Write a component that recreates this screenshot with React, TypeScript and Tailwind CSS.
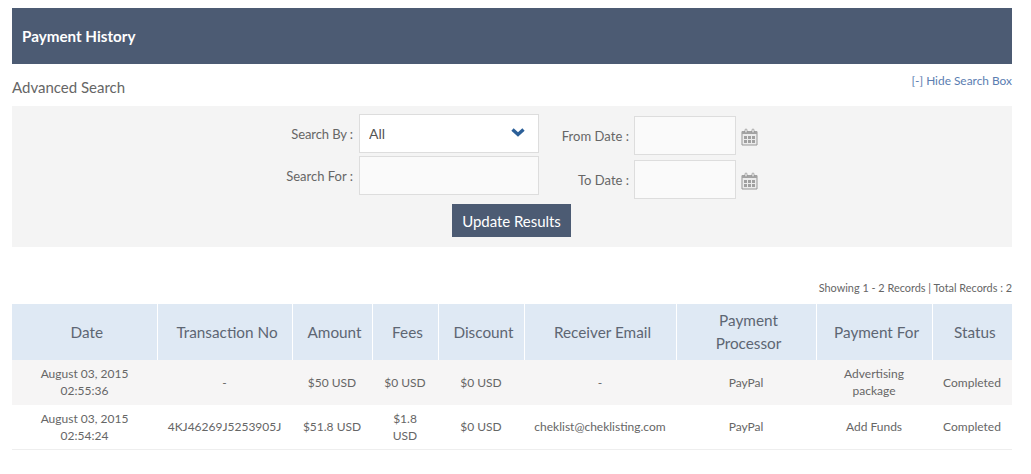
import React from "react";

function CalendarIcon() {
  return (
    <svg width="17" height="18" viewBox="0 0 17 18" className="shrink-0" aria-hidden="true">
      <path d="M1 3.5h15v13.5H1z" fill="#ececec" stroke="#979797" strokeWidth="1" />
      <rect x="1" y="3" width="15" height="3" fill="#a3a3a3" />
      <rect x="4" y="1" width="2" height="4" rx="1" fill="#f4f4f4" stroke="#8d8d8d" strokeWidth="0.7" />
      <rect x="11" y="1" width="2" height="4" rx="1" fill="#f4f4f4" stroke="#8d8d8d" strokeWidth="0.7" />
      {[3, 7, 11].map((x) =>
        [8, 12].map((y) => <rect key={`${x}-${y}`} x={x} y={y} width="3" height="3" fill="#a0a0a0" />)
      )}
    </svg>
  );
}

const cols = [145, 135, 80, 66, 86, 152, 140, 116, 80];
const heads = ["Date", "Transaction No", "Amount", "Fees", "Discount", "Receiver Email", "Payment Processor", "Payment For", "Status"];
const rows = [
  ["August 03, 2015 02:55:36", "-", "$50 USD", "$0 USD", "$0 USD", "-", "PayPal", "Advertising package", "Completed"],
  ["August 03, 2015 02:54:24", "4KJ46269J5253905J", "$51.8 USD", "$1.8 USD", "$0 USD", "cheklist@cheklisting.com", "PayPal", "Add Funds", "Completed"],
];

export default function App() {
  return (
    <div className="bg-white w-[1031px] h-[474px] overflow-hidden px-3 pt-2 font-['Lato',sans-serif] text-[#666]">
      <div className="w-[1000px]">
        <header className="h-14 bg-[#4c5b73] flex items-center px-2.5">
          <h1 className="text-[15.2px] font-bold text-white">Payment History</h1>
        </header>

        <div className="h-[42px] flex justify-between">
          <h2 className="text-[15px] leading-[22px] mt-3 text-[#666]">Advanced Search</h2>
          <a className="text-[11.9px] leading-[18px] mt-2 text-[#5b7db1]">[-] Hide Search Box</a>
        </div>

        <section className="bg-[#f4f4f4] h-[141px] pt-2">
          <div className="flex">
            <div className="flex flex-col gap-[3px]">
              <div className="flex items-center gap-1.5">
                <label className="w-[341px] text-right text-[13px] pt-0.5 tracking-[-0.1px]">Search By :</label>
                <div className="relative w-[180px] h-[39px]">
                  <select className="appearance-none w-full h-full bg-white border border-[#ddd] pl-[9px] text-sm text-[#555]">
                    <option>All</option>
                  </select>
                  <svg width="14" height="10" viewBox="0 0 14 10" className="absolute right-[14px] top-[13px] pointer-events-none" aria-hidden="true">
                    <path d="M1.5 2.5 7 7.5l5.5-5" fill="none" stroke="#2b5f98" strokeWidth="3.4" />
                  </svg>
                </div>
              </div>
              <div className="flex items-center gap-1.5">
                <label className="w-[341px] text-right text-[13px] pt-[3px]">Search For :</label>
                <input className="w-[180px] h-[39px] bg-[#fafafa] border border-[#ddd]" />
              </div>
            </div>

            <div className="flex flex-col gap-[5px] mt-0.5">
              <div className="flex items-center">
                <label className="w-[91px] text-right text-[13px] pt-0.5 pr-px tracking-[0.05px]">From Date :</label>
                <input className="ml-1 w-[102px] h-[39px] bg-[#fafafa] border border-[#ddd]" />
                <div className="ml-[5px] mt-[3px]"><CalendarIcon /></div>
              </div>
              <div className="flex items-center">
                <label className="w-[91px] text-right text-[13px] pt-0.5 pr-px">To Date :</label>
                <input className="ml-1 w-[102px] h-[39px] bg-[#fafafa] border border-[#ddd]" />
                <div className="ml-[5px] mt-[3px]"><CalendarIcon /></div>
              </div>
            </div>
          </div>
          <div className="flex justify-center mt-[5px] pr-px">
            <button className="w-[119px] h-[33px] bg-[#4c5b73] text-white text-[15px] pt-0.5 tracking-[-0.05px]">Update Results</button>
          </div>
        </section>

        <p className="text-right text-[10.9px] leading-4 mt-[33px] mb-2 text-[#666]">Showing 1 - 2 Records | Total Records : 2</p>

        <table className="w-[1000px] table-fixed border-collapse">
          <colgroup>
            {cols.map((w, i) => (
              <col key={i} style={{ width: w }} />
            ))}
          </colgroup>
          <thead>
            <tr className="bg-[#dfe9f4] h-14">
              {heads.map((h) => (
                <th key={h} className="font-normal text-[15.3px] leading-[23px] text-[#5d6673] text-center pl-[13px] pr-2 border-l border-white first:border-l-0">
                  {h}
                </th>
              ))}
            </tr>
          </thead>
          <tbody>
            {rows.map((r, i) => (
              <tr key={i} className={i === 0 ? "bg-[#f6f5f5] h-[45px]" : "bg-white h-[44px] border-b border-[#eeeeee]"}>
                {r.map((c, j) => (
                  <td key={j} className={i === 0 ? "text-xs leading-[17px] text-center px-2 pb-px text-[#666] align-middle" : "text-xs leading-[17px] text-center px-2 text-[#666] align-middle"}>
                    {c}
                  </td>
                ))}
              </tr>
            ))}
          </tbody>
        </table>
      </div>
    </div>
  );
}
